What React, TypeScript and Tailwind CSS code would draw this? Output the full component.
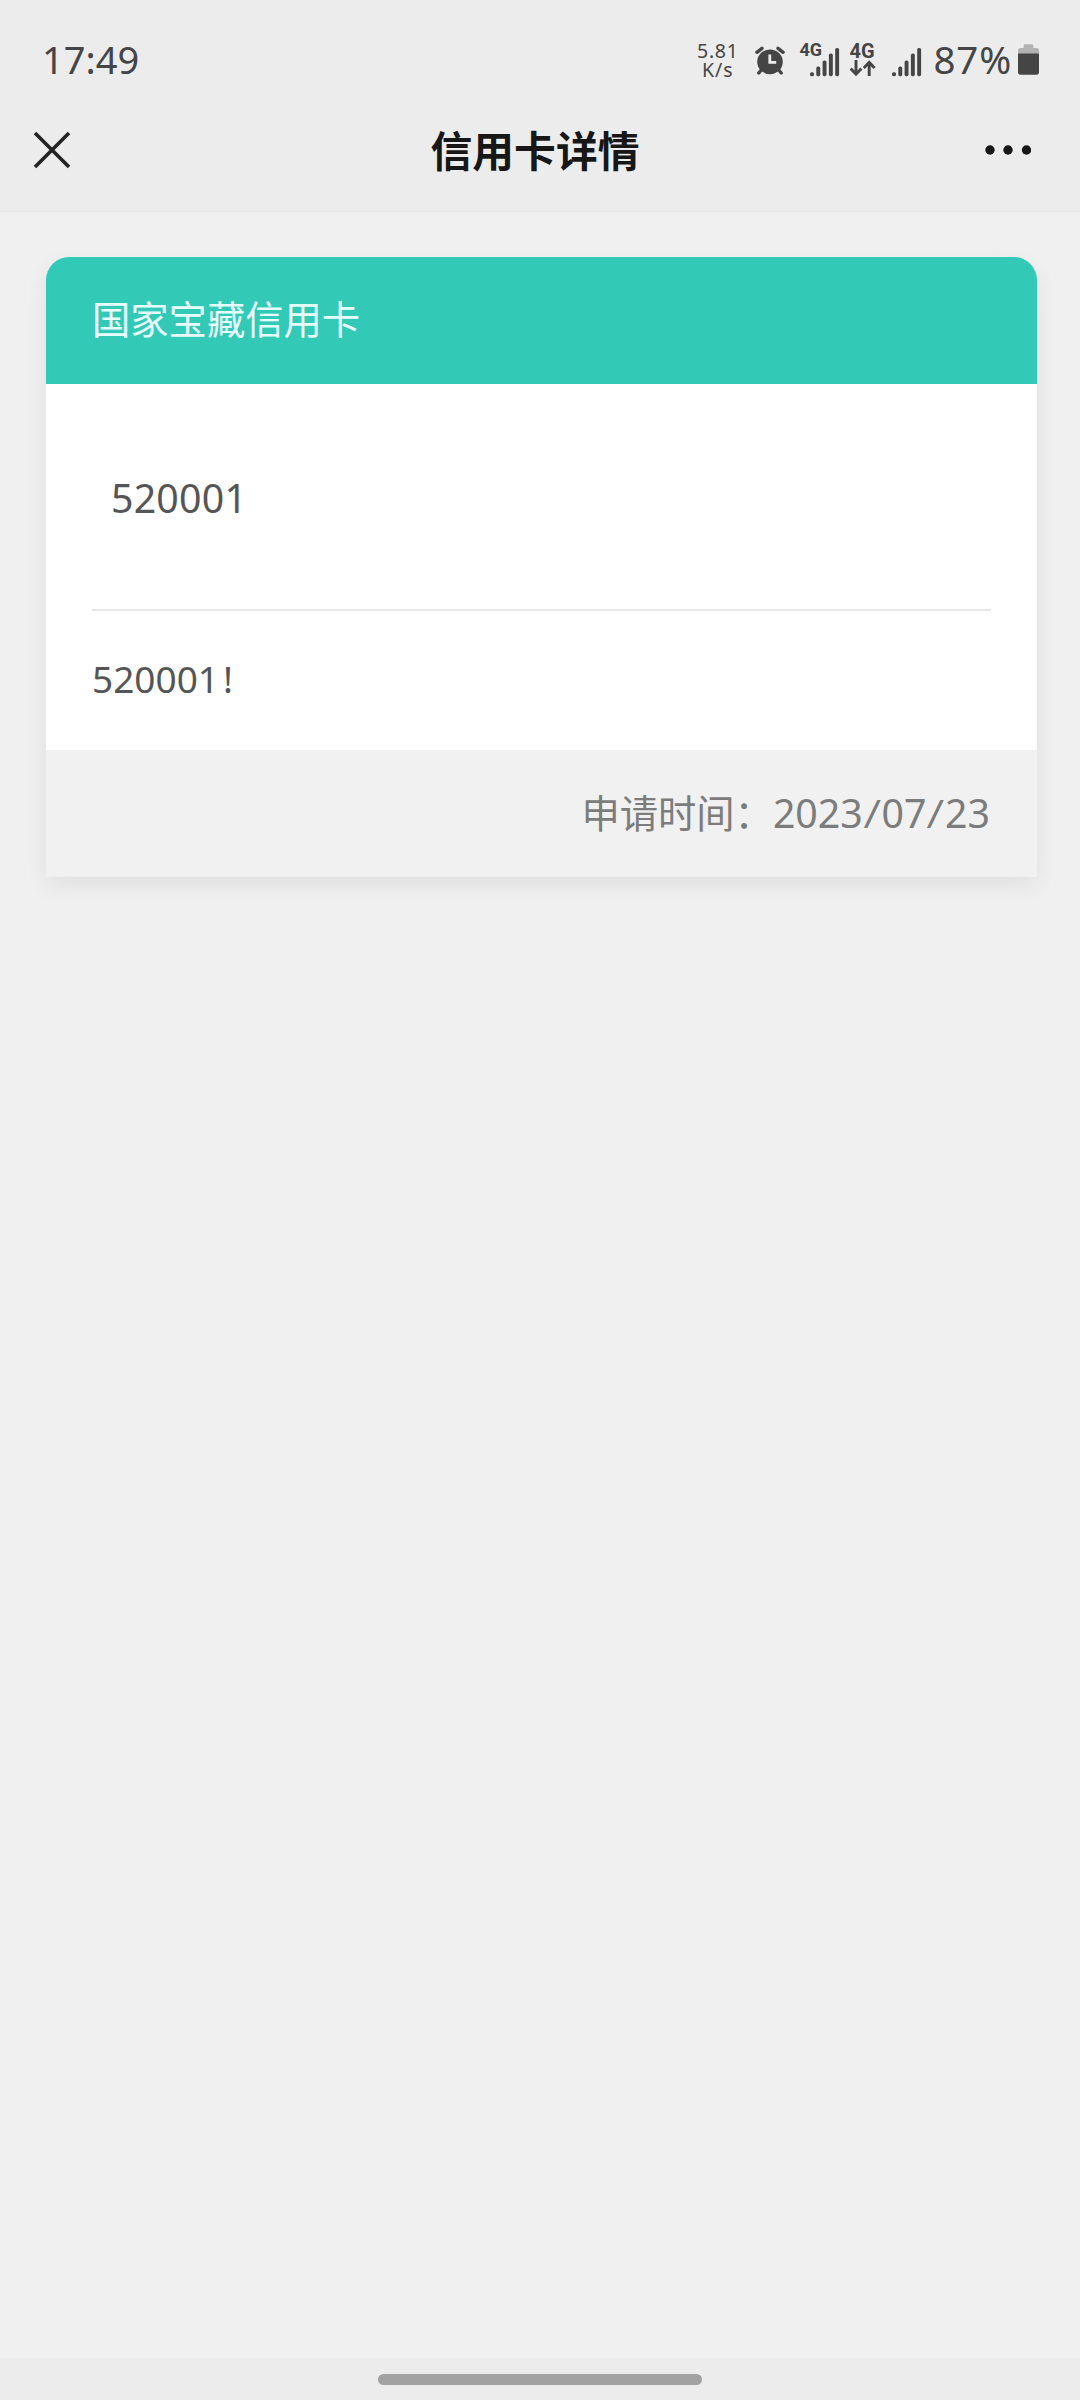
import React from 'react';

const INK = '#454545';

function AlarmIcon() {
  return (
    <svg className="ml-[16px] mt-[4px] h-[30px] w-[30px]" viewBox="0 0 30 30" fill="none">
      <path d="M7.5 22.5 3.8 27M22.5 22.5l3.7 4.5" stroke={INK} strokeWidth="3.4" strokeLinecap="round" />
      <ellipse cx="15" cy="15.8" rx="12.8" ry="12.4" fill={INK} />
      <path d="M1.9 6.3 7 2.3M28.1 6.3 23 2.3" stroke={INK} strokeWidth="3.4" strokeLinecap="round" />
      <path d="M14.8 8.6v7.8h6.4" stroke="#ededed" strokeWidth="2.8" />
    </svg>
  );
}

function SignalBars() {
  return (
    <svg className="h-[30px] w-[30px]" viewBox="0 0 30 30" fill={INK}>
      <rect x="0" y="25.3" width="4" height="3.9" rx="1.6" />
      <rect x="6.3" y="19.6" width="3.9" height="9.6" rx="1.6" />
      <rect x="12.6" y="13.4" width="3.9" height="15.8" rx="1.6" />
      <rect x="18.9" y="6.6" width="3.9" height="22.6" rx="1.6" />
      <rect x="25.2" y="0.9" width="3.9" height="28.3" rx="1.6" />
    </svg>
  );
}

function DataArrows() {
  return (
    <svg className="h-[17px] w-[26px]" viewBox="0 0 26 17" fill="none" stroke={INK} strokeWidth="2.9">
      <path d="M6 0v14.5M.6 8.6l5.4 5.6 5.4-5.6" />
      <path d="M19.2 16V2M13.8 8l5.4-5.6L24.600 8" />
    </svg>
  );
}

function BatteryIcon() {
  return (
    <svg className="ml-[6px] mt-[2px] h-[31px] w-[21px]" viewBox="0 0 21 31">
      <path d="M0 10V6.4a2.4 2.4 0 0 1 2.4-2.4H5.6V1.5A1.3 1.3 0 0 1 6.9.2H14a1.3 1.3 0 0 1 1.3 1.3V4h3.3A2.4 2.4 0 0 1 21 6.4V10Z" fill="#b2b2b2" />
      <path d="M0 9.6h21V28a2.7 2.7 0 0 1-2.7 2.7H2.7A2.7 2.7 0 0 1 0 28Z" fill={INK} />
    </svg>
  );
}

function StatusBar() {
  return (
    <div className="flex h-[88px] items-center justify-between pl-[42px] pr-[41px] pt-[29px] text-[#454545]">
      <span className="text-[38px] leading-[60px]">17:49</span>
      <div className="flex h-[60px] items-center">
        <div className="mt-[3px] flex flex-col items-center text-[19.5px] leading-[19px]">
          <span className="tracking-[0.7px]">5.81</span>
          <span className="tracking-[0.9px]">K/s</span>
        </div>
        <AlarmIcon />
        <div className="relative ml-[25px] mt-[6px]">
          <SignalBars />
          <span className="absolute left-[-10px] top-[-7px] font-[Roboto] text-[18px] font-bold leading-[20px]">4G</span>
        </div>
        <div className="ml-[10px] mt-[2px] flex flex-col items-start">
          <span className="font-[Roboto] text-[20px] font-bold leading-[18px]">4G</span>
          <DataArrows />
        </div>
        <div className="ml-[16px] mt-[6px]">
          <SignalBars />
        </div>
        <span className="ml-[12px] text-[38.5px] leading-[60px] tracking-[0.8px]">87%</span>
        <BatteryIcon />
      </div>
    </div>
  );
}

function NavBar() {
  return (
    <div className="grid h-[124px] grid-cols-[1fr_auto_1fr] items-center border-b border-[#e6e6e6] pl-[33px] pr-[49px]">
      <svg className="h-[38px] w-[38px]" viewBox="0 0 38 38" stroke="#232323" strokeWidth="3.6">
        <path d="M2 2l34 34M36 2 2 36" />
      </svg>
      <h1 className="ml-[6px] mt-[3px] text-[41.8px] font-bold leading-[60px] text-[#171717]">信用卡详情</h1>
      <svg className="h-[10px] w-[46px] justify-self-end" viewBox="0 0 46 10" fill="#171717">
        <circle cx="5" cy="5" r="4.7" />
        <circle cx="23" cy="5" r="4.7" />
        <circle cx="41.5" cy="5" r="4.7" />
      </svg>
    </div>
  );
}

function CreditCard() {
  return (
    <section className="ml-[46px] mt-[45px] w-[991px] rounded-t-[23px] bg-white shadow-[0_9px_24px_rgba(0,0,0,0.07)]">
      <header className="flex h-[127px] items-center rounded-t-[23px] bg-[#32c9b7] px-[46px] pb-[4px]">
        <h2 className="text-[38.3px] leading-[60px] text-[#e6fffc]">国家宝藏信用卡</h2>
      </header>
      <div className="h-[366px] px-[46px] text-[#555555]">
        <p className="h-[227px] border-b-2 border-[#e5e7e6] pl-[19px] text-[39.3px] leading-[228px] tracking-[0.2px]">520001</p>
        <p className="text-[37px] leading-[135px]">
          520001<span className="ml-[4px]">!</span>
        </p>
      </div>
      <footer className="flex h-[127px] items-center justify-end bg-[#f1f1f1] px-[47px] pb-[2px] leading-[60px] text-[#7c7c7c]">
        <span className="text-[38.3px]">申请时间：</span>
        <span className="text-[39.3px]">
          2023<span className="mx-[2px] inline-block -skew-x-6">/</span>07
          <span className="mx-[2px] inline-block -skew-x-6">/</span>23
        </span>
      </footer>
    </section>
  );
}

export default function App() {
  return (
    <main className="flex h-[2400px] w-[1080px] flex-col overflow-hidden bg-[#f0f0f0] font-['Noto_Sans','Noto_Sans_CJK_SC',sans-serif]">
      <div className="bg-[#ececec]">
        <StatusBar />
        <NavBar />
      </div>
      <CreditCard />
      <div className="mt-auto flex h-[42px] justify-center bg-[#ececec] pt-[16px]">
        <div className="h-[11px] w-[324px] rounded-full bg-[#a2a2a2]" />
      </div>
    </main>
  );
}
